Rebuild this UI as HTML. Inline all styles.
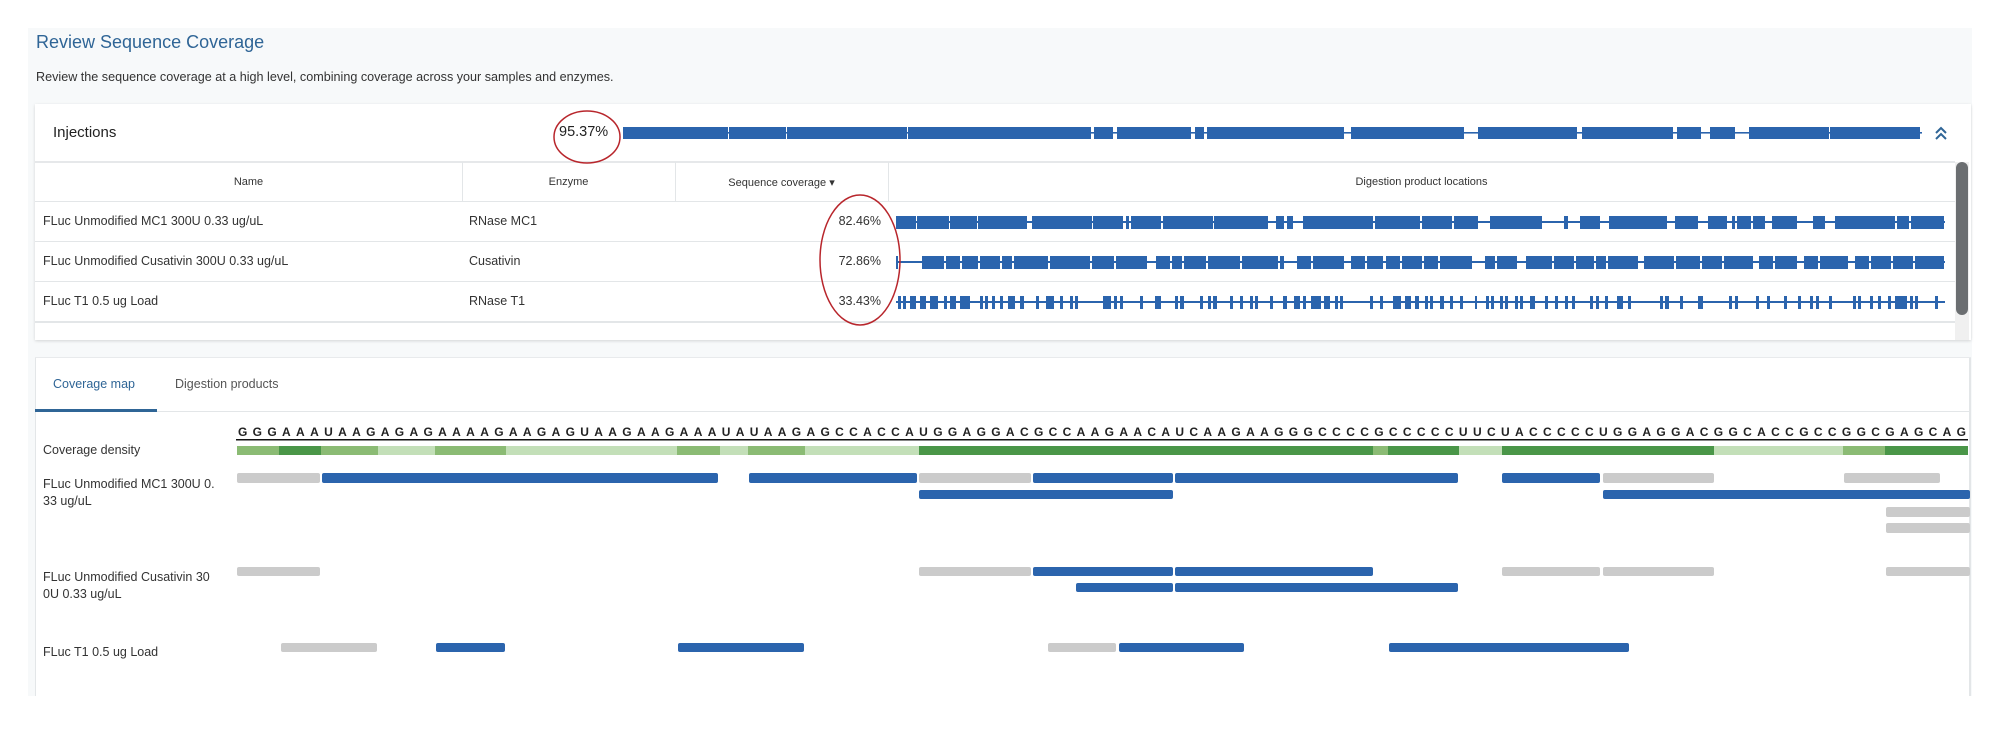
<!DOCTYPE html>
<html><head><meta charset="utf-8"><style>
*{margin:0;padding:0;box-sizing:border-box}
body{width:2000px;height:729px;background:#fff;font-family:"Liberation Sans",sans-serif;color:#333;position:relative;overflow:hidden}
.abs{position:absolute}
.panel{left:28px;top:28px;width:1944px;height:668px;background:#f7f9fa}
.title{left:36px;top:32px;font-size:18px;color:#2f6596}
.sub{left:36px;top:70px;font-size:12.6px;color:#333}
.card{left:35px;top:104px;width:1936px;height:236px;background:#fff;box-shadow:0 1px 3px rgba(0,0,0,.15)}
.t{font-size:12.5px;color:#333;white-space:nowrap}
.h{font-size:11px;color:#333;text-align:center;white-space:nowrap}
.card2{left:35px;top:357px;width:1936px;height:339px;background:#fff;border-left:1px solid #e3e6e8;border-right:2px solid #e3e6e8}
</style></head><body>
<div class="abs panel"></div>
<div class="abs title">Review Sequence Coverage</div>
<div class="abs sub">Review the sequence coverage at a high level, combining coverage across your samples and enzymes.</div>

<div class="abs card"></div>
<div class="abs" style="left:53px;top:124px;font-size:15px;color:#222">Injections</div>
<div class="abs" style="left:559px;top:124px;font-size:14.5px;color:#222">95.37%</div>
<div class="abs" style="left:35px;top:161px;width:1920px;height:2px;background:#e6e8ea"></div>
<div class="abs h" style="left:35px;top:176px;width:427px">Name</div>
<div class="abs h" style="left:462px;top:176px;width:213px">Enzyme</div>
<div class="abs h" style="left:675px;top:176px;width:213px">Sequence coverage ▾</div>
<div class="abs h" style="left:888px;top:176px;width:1067px">Digestion product locations</div>
<div class="abs" style="left:462px;top:162px;width:1px;height:40px;background:#e3e6e8"></div>
<div class="abs" style="left:675px;top:162px;width:1px;height:40px;background:#e3e6e8"></div>
<div class="abs" style="left:888px;top:162px;width:1px;height:40px;background:#e3e6e8"></div>
<div class="abs" style="left:35px;top:201px;width:1920px;height:1px;background:#e3e6e8"></div>
<div class="abs" style="left:35px;top:241px;width:1920px;height:1px;background:#e3e6e8"></div>
<div class="abs" style="left:35px;top:281px;width:1920px;height:1px;background:#e3e6e8"></div>
<div class="abs" style="left:35px;top:321px;width:1920px;height:2px;background:#e3e6e8"></div>
<div class="abs" style="left:1955px;top:162px;width:14px;height:178px;background:#f0f0f0"></div>
<div class="abs" style="left:1956px;top:162px;width:12px;height:153px;background:#6b6e71;border-radius:6px"></div>

<div class="abs t" style="left:43px;top:214px">FLuc Unmodified MC1 300U 0.33 ug/uL</div>
<div class="abs t" style="left:469px;top:214px">RNase MC1</div>
<div class="abs t" style="left:815px;top:214px;width:66px;text-align:right">82.46%</div>
<div class="abs t" style="left:43px;top:254px">FLuc Unmodified Cusativin 300U 0.33 ug/uL</div>
<div class="abs t" style="left:469px;top:254px">Cusativin</div>
<div class="abs t" style="left:815px;top:254px;width:66px;text-align:right">72.86%</div>
<div class="abs t" style="left:43px;top:294px">FLuc T1 0.5 ug Load</div>
<div class="abs t" style="left:469px;top:294px">RNase T1</div>
<div class="abs t" style="left:815px;top:294px;width:66px;text-align:right">33.43%</div>

<svg class="abs" style="left:0;top:0" width="2000" height="729">
<g fill="#2b64ad">
<rect x="623" y="132" width="1299" height="1.6"/>
<rect x="623" y="127" width="105" height="12"/><rect x="729" y="127" width="57" height="12"/><rect x="787" y="127" width="120" height="12"/><rect x="908" y="127" width="183" height="12"/>
<rect x="1094" y="127" width="19" height="12"/><rect x="1117" y="127" width="74" height="12"/><rect x="1195" y="127" width="9" height="12"/><rect x="1207" y="127" width="137" height="12"/>
<rect x="1351" y="127" width="113" height="12"/><rect x="1478" y="127" width="99" height="12"/><rect x="1582" y="127" width="91" height="12"/><rect x="1677" y="127" width="24" height="12"/>
<rect x="1710" y="127" width="25" height="12"/><rect x="1749" y="127" width="80" height="12"/><rect x="1830" y="127" width="90" height="12"/>
<rect x="896" y="221" width="1049" height="2"/>
<rect x="896" y="216" width="20" height="13"/><rect x="917" y="216" width="32" height="13"/><rect x="950" y="216" width="27" height="13"/><rect x="978" y="216" width="49" height="13"/>
<rect x="1032" y="216" width="60" height="13"/><rect x="1093" y="216" width="30" height="13"/><rect x="1126" y="216" width="3" height="13"/><rect x="1131" y="216" width="30" height="13"/><rect x="1163" y="216" width="50" height="13"/><rect x="1214" y="216" width="54" height="13"/>
<rect x="1276" y="216" width="8" height="13"/><rect x="1287" y="216" width="6" height="13"/><rect x="1303" y="216" width="70" height="13"/><rect x="1375" y="216" width="45" height="13"/><rect x="1422" y="216" width="30" height="13"/><rect x="1454" y="216" width="24" height="13"/>
<rect x="1490" y="216" width="52" height="13"/><rect x="1564" y="216" width="4" height="13"/><rect x="1580" y="216" width="20" height="13"/><rect x="1609" y="216" width="58" height="13"/><rect x="1675" y="216" width="23" height="13"/>
<rect x="1708" y="216" width="19" height="13"/><rect x="1732" y="216" width="3" height="13"/><rect x="1737" y="216" width="14" height="13"/><rect x="1753" y="216" width="12" height="13"/><rect x="1772" y="216" width="25" height="13"/>
<rect x="1813" y="216" width="12" height="13"/><rect x="1835" y="216" width="60" height="13"/><rect x="1897" y="216" width="12" height="13"/><rect x="1911" y="216" width="33" height="13"/>
<rect x="896" y="261" width="1049" height="2"/>
<rect x="896" y="256" width="2" height="13"/>
<rect x="922" y="256" width="22" height="13"/><rect x="946" y="256" width="14" height="13"/><rect x="962" y="256" width="16" height="13"/><rect x="980" y="256" width="20" height="13"/><rect x="1002" y="256" width="10" height="13"/><rect x="1014" y="256" width="34" height="13"/><rect x="1050" y="256" width="40" height="13"/>
<rect x="1092" y="256" width="22" height="13"/><rect x="1116" y="256" width="31" height="13"/><rect x="1156" y="256" width="14" height="13"/><rect x="1172" y="256" width="10" height="13"/><rect x="1184" y="256" width="22" height="13"/><rect x="1208" y="256" width="32" height="13"/><rect x="1242" y="256" width="36" height="13"/>
<rect x="1280" y="256" width="4" height="13"/><rect x="1297" y="256" width="14" height="13"/><rect x="1313" y="256" width="31" height="13"/><rect x="1351" y="256" width="14" height="13"/><rect x="1367" y="256" width="16" height="13"/><rect x="1386" y="256" width="14" height="13"/><rect x="1402" y="256" width="20" height="13"/><rect x="1424" y="256" width="14" height="13"/><rect x="1440" y="256" width="32" height="13"/>
<rect x="1485" y="256" width="10" height="13"/><rect x="1497" y="256" width="20" height="13"/><rect x="1526" y="256" width="26" height="13"/><rect x="1554" y="256" width="20" height="13"/><rect x="1576" y="256" width="18" height="13"/><rect x="1596" y="256" width="10" height="13"/><rect x="1608" y="256" width="30" height="13"/>
<rect x="1644" y="256" width="30" height="13"/><rect x="1676" y="256" width="24" height="13"/><rect x="1702" y="256" width="20" height="13"/><rect x="1724" y="256" width="29" height="13"/><rect x="1759" y="256" width="14" height="13"/><rect x="1775" y="256" width="22" height="13"/><rect x="1804" y="256" width="14" height="13"/><rect x="1820" y="256" width="28" height="13"/>
<rect x="1855" y="256" width="14" height="13"/><rect x="1871" y="256" width="20" height="13"/><rect x="1893" y="256" width="20" height="13"/><rect x="1915" y="256" width="29" height="13"/>
<rect x="896" y="301" width="1049" height="2"/>
<g>
<rect x="898" y="296" width="3" height="13"/><rect x="903" y="296" width="3" height="13"/><rect x="910" y="296" width="6" height="13"/><rect x="920" y="296" width="6" height="13"/><rect x="930" y="296" width="8" height="13"/><rect x="944" y="296" width="3" height="13"/><rect x="950" y="296" width="6" height="13"/><rect x="960" y="296" width="10" height="13"/><rect x="980" y="296" width="3" height="13"/><rect x="985" y="296" width="3" height="13"/><rect x="992" y="296" width="3" height="13"/><rect x="1000" y="296" width="3" height="13"/><rect x="1008" y="296" width="7" height="13"/><rect x="1020" y="296" width="4" height="13"/><rect x="1036" y="296" width="3" height="13"/><rect x="1046" y="296" width="8" height="13"/><rect x="1060" y="296" width="3" height="13"/><rect x="1070" y="296" width="3" height="13"/><rect x="1075" y="296" width="3" height="13"/><rect x="1103" y="296" width="8" height="13"/><rect x="1114" y="296" width="3" height="13"/><rect x="1120" y="296" width="3" height="13"/><rect x="1140" y="296" width="3" height="13"/><rect x="1155" y="296" width="6" height="13"/><rect x="1175" y="296" width="3" height="13"/><rect x="1180" y="296" width="4" height="13"/><rect x="1200" y="296" width="3" height="13"/><rect x="1208" y="296" width="3" height="13"/><rect x="1213" y="296" width="4" height="13"/><rect x="1230" y="296" width="3" height="13"/><rect x="1240" y="296" width="3" height="13"/><rect x="1250" y="296" width="3" height="13"/><rect x="1255" y="296" width="3" height="13"/><rect x="1270" y="296" width="3" height="13"/><rect x="1283" y="296" width="4" height="13"/><rect x="1294" y="296" width="6" height="13"/><rect x="1303" y="296" width="3" height="13"/><rect x="1311" y="296" width="10" height="13"/><rect x="1324" y="296" width="6" height="13"/><rect x="1335" y="296" width="3" height="13"/><rect x="1340" y="296" width="3" height="13"/><rect x="1370" y="296" width="3" height="13"/><rect x="1380" y="296" width="3" height="13"/><rect x="1393" y="296" width="8" height="13"/><rect x="1405" y="296" width="6" height="13"/><rect x="1415" y="296" width="4" height="13"/><rect x="1425" y="296" width="3" height="13"/><rect x="1430" y="296" width="3" height="13"/><rect x="1440" y="296" width="4" height="13"/><rect x="1450" y="296" width="3" height="13"/><rect x="1460" y="296" width="3" height="13"/><rect x="1475" y="296" width="2" height="13"/><rect x="1486" y="296" width="3" height="13"/><rect x="1491" y="296" width="3" height="13"/><rect x="1500" y="296" width="3" height="13"/><rect x="1505" y="296" width="3" height="13"/><rect x="1515" y="296" width="3" height="13"/><rect x="1520" y="296" width="3" height="13"/><rect x="1530" y="296" width="5" height="13"/><rect x="1545" y="296" width="3" height="13"/><rect x="1555" y="296" width="3" height="13"/><rect x="1565" y="296" width="3" height="13"/><rect x="1572" y="296" width="3" height="13"/><rect x="1590" y="296" width="3" height="13"/><rect x="1596" y="296" width="3" height="13"/><rect x="1605" y="296" width="3" height="13"/><rect x="1617" y="296" width="6" height="13"/><rect x="1628" y="296" width="3" height="13"/><rect x="1660" y="296" width="3" height="13"/><rect x="1665" y="296" width="4" height="13"/><rect x="1680" y="296" width="3" height="13"/><rect x="1698" y="296" width="5" height="13"/><rect x="1729" y="296" width="3" height="13"/><rect x="1735" y="296" width="3" height="13"/><rect x="1756" y="296" width="3" height="13"/><rect x="1767" y="296" width="3" height="13"/><rect x="1784" y="296" width="3" height="13"/><rect x="1798" y="296" width="3" height="13"/><rect x="1810" y="296" width="3" height="13"/><rect x="1816" y="296" width="3" height="13"/><rect x="1829" y="296" width="3" height="13"/><rect x="1853" y="296" width="3" height="13"/><rect x="1858" y="296" width="3" height="13"/><rect x="1870" y="296" width="3" height="13"/><rect x="1878" y="296" width="3" height="13"/><rect x="1888" y="296" width="3" height="13"/><rect x="1895" y="296" width="12" height="13"/><rect x="1910" y="296" width="3" height="13"/><rect x="1915" y="296" width="3" height="13"/><rect x="1935" y="296" width="3" height="13"/>
</g>
</g>
<path d="M1936 133 L1941 128 L1946 133 M1936 139 L1941 134 L1946 139" fill="none" stroke="#2f6596" stroke-width="2"/>
<ellipse cx="587" cy="137" rx="33" ry="26" fill="none" stroke="#b8262c" stroke-width="1.5"/>
<ellipse cx="860" cy="260" rx="40" ry="65" fill="none" stroke="#b8262c" stroke-width="1.5"/>
</svg>

<div class="abs card2"></div>
<div class="abs" style="left:35px;top:357px;width:1936px;height:1px;background:#e8eaec"></div>
<div class="abs" style="left:53px;top:377px;font-size:12.5px;color:#2f6596">Coverage map</div>
<div class="abs" style="left:175px;top:377px;font-size:12.5px;color:#555">Digestion products</div>
<div class="abs" style="left:36px;top:411px;width:1933px;height:1px;background:#e3e6e8"></div>
<div class="abs" style="left:35px;top:409px;width:122px;height:3px;background:#2f6596"></div>
<div class="abs t" style="left:43px;top:443px;font-size:12.5px">Coverage density</div>
<div class="abs t" style="left:43px;top:476px;font-size:12.5px;line-height:17px">FLuc Unmodified MC1 300U 0.<br>33 ug/uL</div>
<div class="abs t" style="left:43px;top:569px;font-size:12.5px;line-height:17px">FLuc Unmodified Cusativin 30<br>0U 0.33 ug/uL</div>
<div class="abs t" style="left:43px;top:645px;font-size:12.5px">FLuc T1 0.5 ug Load</div>

<svg class="abs" style="left:0;top:0" width="2000" height="729">
<text x="238" y="436" textLength="1728" lengthAdjust="spacing" font-family="Liberation Sans Narrow, Liberation Sans, sans-serif" font-size="12" font-weight="bold" fill="#222">GGGAAAUAAGAGAGAAAAGAAGAGUAAGAAGAAAUAUAAGAGCCACCAUGGAGGACGCCAAGAACAUCAAGAAGGGCCCCGCCCCCUUCUACCCCCUGGAGGACGGCACCGCCGGCGAGCAG</text>
<rect x="236" y="439" width="1732" height="1.5" fill="#111"/>
<g>
<rect x="237" y="446" width="42" height="9" fill="#8bbb74"/><rect x="279" y="446" width="42" height="9" fill="#4a9648"/><rect x="321" y="446" width="57" height="9" fill="#8bbb74"/><rect x="378" y="446" width="57" height="9" fill="#c3dfb8"/><rect x="435" y="446" width="71" height="9" fill="#8bbb74"/><rect x="506" y="446" width="171" height="9" fill="#c3dfb8"/><rect x="677" y="446" width="43" height="9" fill="#8bbb74"/><rect x="720" y="446" width="28" height="9" fill="#c3dfb8"/><rect x="748" y="446" width="57" height="9" fill="#8bbb74"/><rect x="805" y="446" width="114" height="9" fill="#c3dfb8"/><rect x="919" y="446" width="454" height="9" fill="#4a9648"/><rect x="1373" y="446" width="15" height="9" fill="#8bbb74"/><rect x="1388" y="446" width="71" height="9" fill="#4a9648"/><rect x="1459" y="446" width="43" height="9" fill="#c3dfb8"/><rect x="1502" y="446" width="212" height="9" fill="#4a9648"/><rect x="1714" y="446" width="129" height="9" fill="#c3dfb8"/><rect x="1843" y="446" width="42" height="9" fill="#8bbb74"/><rect x="1885" y="446" width="83" height="9" fill="#4a9648"/>
</g>
<g fill="#cbcbcb">
<rect x="237" y="473" width="83" height="10" rx="2"/><rect x="919" y="473" width="112" height="10" rx="2"/><rect x="1603" y="473" width="111" height="10" rx="2"/><rect x="1844" y="473" width="96" height="10" rx="2"/>
<rect x="1886" y="507" width="84" height="10" rx="2"/><rect x="1886" y="523" width="84" height="10" rx="2"/>
<rect x="237" y="567" width="83" height="9" rx="2"/><rect x="919" y="567" width="112" height="9" rx="2"/><rect x="1502" y="567" width="98" height="9" rx="2"/><rect x="1603" y="567" width="111" height="9" rx="2"/><rect x="1886" y="567" width="84" height="9" rx="2"/>
<rect x="281" y="643" width="96" height="9" rx="2"/><rect x="1048" y="643" width="68" height="9" rx="2"/>
</g>
<g fill="#2b64ad">
<rect x="322" y="473" width="396" height="10" rx="2"/><rect x="749" y="473" width="168" height="10" rx="2"/><rect x="1033" y="473" width="140" height="10" rx="2"/><rect x="1175" y="473" width="283" height="10" rx="2"/><rect x="1502" y="473" width="98" height="10" rx="2"/>
<rect x="919" y="490" width="254" height="9" rx="2"/><rect x="1603" y="490" width="367" height="9" rx="2"/>
<rect x="1033" y="567" width="140" height="9" rx="2"/><rect x="1175" y="567" width="198" height="9" rx="2"/>
<rect x="1076" y="583" width="97" height="9" rx="2"/><rect x="1175" y="583" width="283" height="9" rx="2"/>
<rect x="436" y="643" width="69" height="9" rx="2"/><rect x="678" y="643" width="126" height="9" rx="2"/><rect x="1119" y="643" width="125" height="9" rx="2"/><rect x="1389" y="643" width="240" height="9" rx="2"/>
</g>
</svg>
</body></html>
